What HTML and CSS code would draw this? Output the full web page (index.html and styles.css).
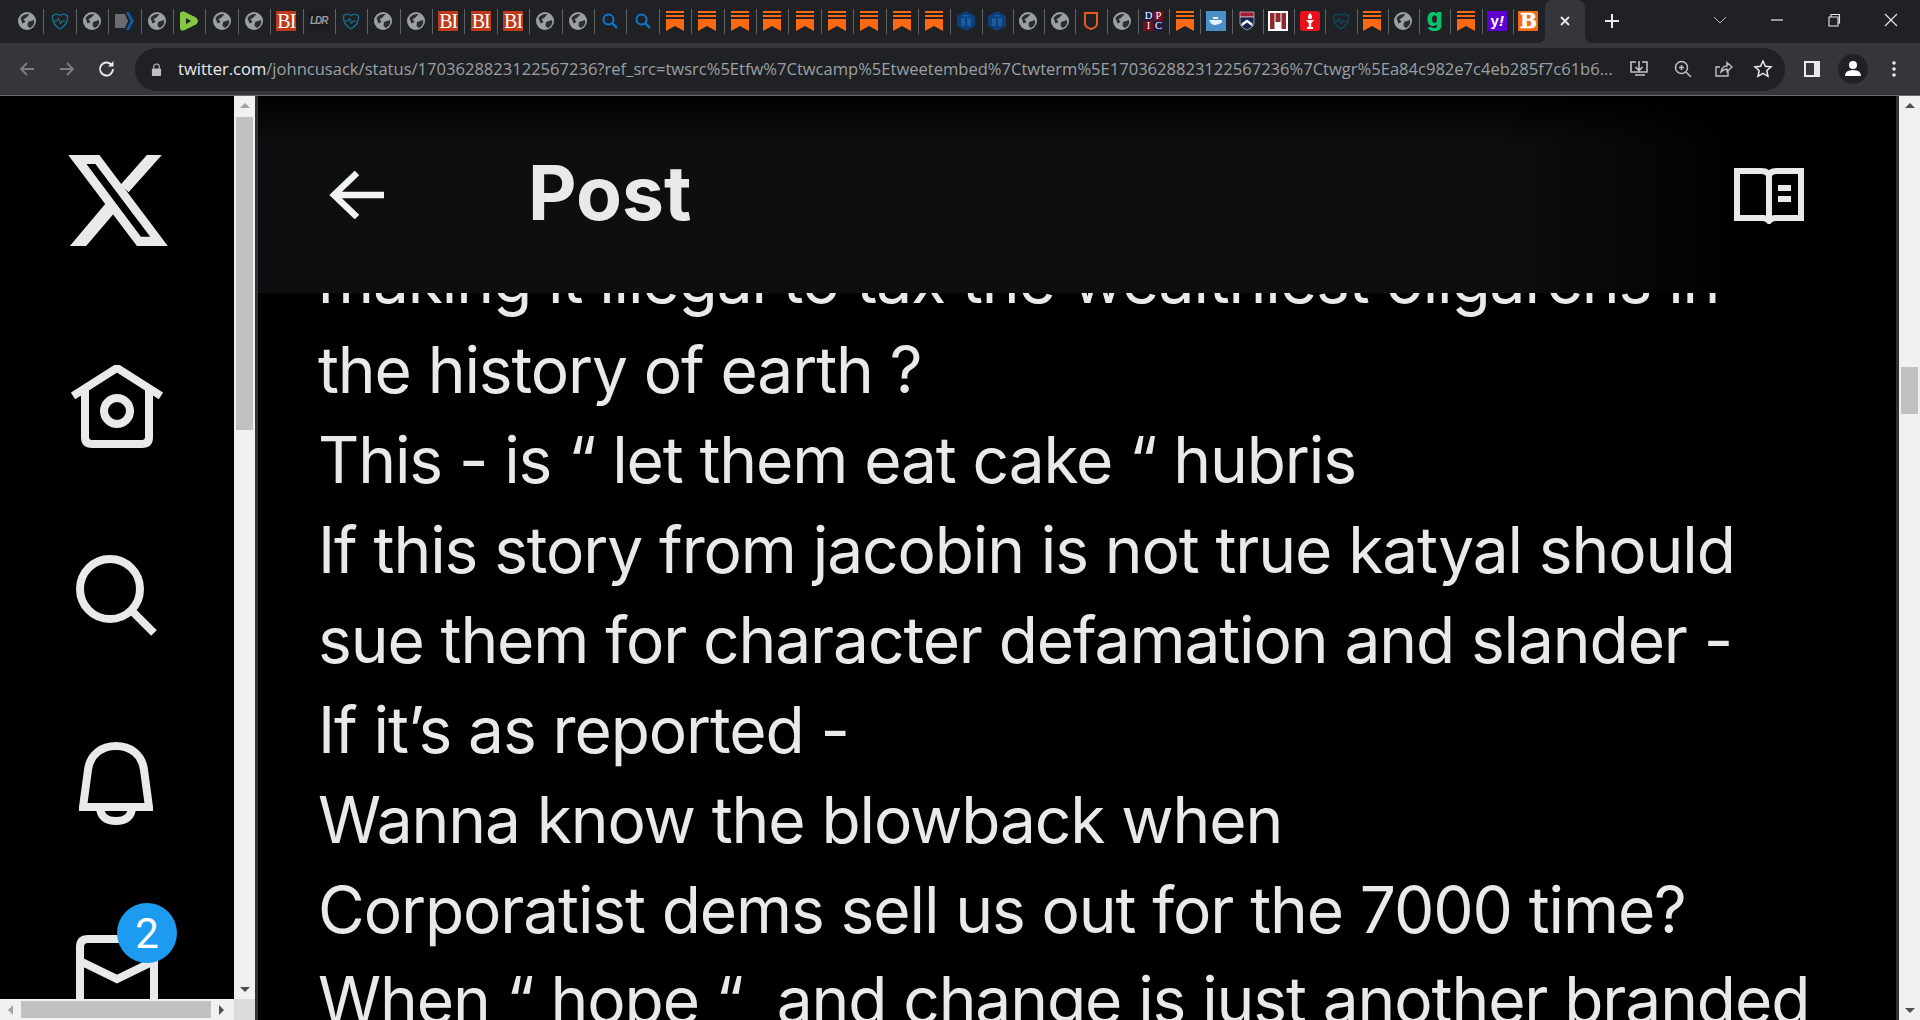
FILE: index.html
```html
<!DOCTYPE html>
<html lang="en">
<head>
<meta charset="utf-8">
<title>Post / X</title>
<link rel="stylesheet" href="styles.css">
</head>
<body>
<svg class="defs" width="0" height="0">
  <symbol id="globe" viewBox="0 0 20 20"><circle cx="10" cy="10" r="9" fill="#9aa0a6"/><path d="M3.500 7Q6.500 2.500 12.500 3L9 7 6.500 8l2 3-3 1.500zM11 11l6-2q1 5.500-4 8l-2.500-2z" fill="#2b2d30"/></symbol>
  <symbol id="heart" viewBox="0 0 20 20"><path d="M10 18C5 15 2 10 2.500 5 5 2.500 8 3 10 4.500 12 3 15 2.500 17.500 5 18 10 15 15 10 18z" fill="none" stroke="#15708f" stroke-width="1.400"/><path d="M4 10h3l1.500-3 2 6 1.500-3h3" fill="none" stroke="#1c7f9c" stroke-width="1"/></symbol>
  <symbol id="heart-dim" viewBox="0 0 20 20"><path d="M10 18C5 15 2 10 2.500 5 5 2.500 8 3 10 4.500 12 3 15 2.500 17.500 5 18 10 15 15 10 18z" fill="none" stroke="#0f4a5e" stroke-width="1.400"/><path d="M4 10h3l1.500-3 2 6 1.500-3h3" fill="none" stroke="#14566c" stroke-width="1"/></symbol>
  <symbol id="arrow" viewBox="0 0 20 20"><path d="M1 3h10l3 7-3 7H1z" fill="#6a6c70"/><path d="M12 1h3l5 9-5 9h-3l4.500-9z" fill="#0d5cab"/></symbol>
  <symbol id="rumble" viewBox="0 0 20 20"><path d="M1 3q0-3 4-2.500l12 6q4 3.500 0 7l-12 6q-4 .5-4-2.500z" fill="#85c742"/><path d="M7 7v6l5-3z" fill="#202124"/></symbol>
  <symbol id="search" viewBox="0 0 20 20"><circle cx="8.500" cy="8.500" r="5" fill="none" stroke="#0b78d0" stroke-width="2"/><path d="m12.500 12.500 4.500 4.500" stroke="#0b78d0" stroke-width="2.400"/></symbol>
  <symbol id="bookmark" viewBox="0 0 20 20"><path d="M1 0h18v2H1zM1 4h18v2H1zM1 8h18v12l-9-5-9 5z" fill="#f96a13"/></symbol>
  <symbol id="hex" viewBox="0 0 20 20"><path d="M10 0 19 5v10l-9 5-9-5V5z" fill="#0d3f78"/><path d="M5 7h4v8H5zM11 7h4v8h-4zM7 4h6v1.500H7z" fill="#1c5c9e"/></symbol>
  <symbol id="shield" viewBox="0 0 20 20"><path d="M4 2h12v11q0 3-6 5-6-2-6-5z" fill="none" stroke="#e8591c" stroke-width="2"/></symbol>
  <symbol id="docker" viewBox="0 0 20 20"><path d="M0 0h20v20H0z" fill="#4b8fc9"/><path d="M3 9h13q1 4-7 5-4 0-6-5zM7 6h5v2H7z" fill="#e8f2fa"/></symbol>
  <symbol id="harvard" viewBox="0 0 20 20"><path d="M3 1h14v5H3z" fill="#a51c30" stroke="#e8e8ee" stroke-width=".6"/><path d="M3 6h14v6q0 4-7 7-7-3-7-7z" fill="#16244f" stroke="#e8e8ee" stroke-width=".6"/><path d="m4.500 12.500 5.500-4 5.500 4v3l-5.500-4-5.500 4z" fill="#fff"/></symbol>
  <symbol id="red-lines" viewBox="0 0 20 20"><path d="M0 0h20v20H0z" fill="#fff"/><path d="M2 2h4.500v16H2zM7.500 2h5v9h-5zM13.500 2H18v16h-4.500z" fill="#8c2a2f"/></symbol>
  <symbol id="torch" viewBox="0 0 20 20"><rect width="20" height="20" rx="3" fill="#e8101a"/><path d="M10 2q3 3 1.500 6h-3Q7 5 10 2zM6 9h8l-2.500 3h-3zM8.800 12h2.400v4H8.800zM7 16h6v2H7z" fill="#fff"/></symbol>
</svg>

<div class="browser">
  <div class="tabstrip">
    <div class="tabs tabs-wide">
      <div class="tab"><svg class="fav"><use href="#globe"/></svg></div>
      <div class="tab"><svg class="fav"><use href="#heart"/></svg></div>
      <div class="tab"><svg class="fav"><use href="#globe"/></svg></div>
      <div class="tab"><svg class="fav"><use href="#arrow"/></svg></div>
      <div class="tab"><svg class="fav"><use href="#globe"/></svg></div>
      <div class="tab"><svg class="fav"><use href="#rumble"/></svg></div>
      <div class="tab"><svg class="fav"><use href="#globe"/></svg></div>
      <div class="tab"><svg class="fav"><use href="#globe"/></svg></div>
      <div class="tab"><span class="fav-text bi">BI</span></div>
      <div class="tab"><span class="fav-text ldr">LDR</span></div>
      <div class="tab"><svg class="fav"><use href="#heart"/></svg></div>
      <div class="tab"><svg class="fav"><use href="#globe"/></svg></div>
      <div class="tab"><svg class="fav"><use href="#globe"/></svg></div>
      <div class="tab"><span class="fav-text bi">BI</span></div>
      <div class="tab"><span class="fav-text bi">BI</span></div>
      <div class="tab"><span class="fav-text bi">BI</span></div>
      <div class="tab"><svg class="fav"><use href="#globe"/></svg></div>
      <div class="tab"><svg class="fav"><use href="#globe"/></svg></div>
      <div class="tab"><svg class="fav"><use href="#search"/></svg></div>
      <div class="tab"><svg class="fav"><use href="#search"/></svg></div>
      <div class="tab"><svg class="fav"><use href="#bookmark"/></svg></div>
      <div class="tab"><svg class="fav"><use href="#bookmark"/></svg></div>
      <div class="tab"><svg class="fav"><use href="#bookmark"/></svg></div>
      <div class="tab"><svg class="fav"><use href="#bookmark"/></svg></div>
      <div class="tab"><svg class="fav"><use href="#bookmark"/></svg></div>
      <div class="tab"><svg class="fav"><use href="#bookmark"/></svg></div>
      <div class="tab"><svg class="fav"><use href="#bookmark"/></svg></div>
      <div class="tab"><svg class="fav"><use href="#bookmark"/></svg></div>
      <div class="tab"><svg class="fav"><use href="#bookmark"/></svg></div>
    </div>
    <div class="tabs tabs-narrow">
      <div class="tab"><svg class="fav"><use href="#hex"/></svg></div>
      <div class="tab"><svg class="fav"><use href="#hex"/></svg></div>
      <div class="tab"><svg class="fav"><use href="#globe"/></svg></div>
      <div class="tab"><svg class="fav"><use href="#globe"/></svg></div>
      <div class="tab"><svg class="fav"><use href="#shield"/></svg></div>
      <div class="tab"><svg class="fav"><use href="#globe"/></svg></div>
      <div class="tab"><span class="fav-text dpic"><i>D</i><i>P</i><i>I</i><i>C</i></span></div>
      <div class="tab"><svg class="fav"><use href="#bookmark"/></svg></div>
      <div class="tab"><svg class="fav"><use href="#docker"/></svg></div>
      <div class="tab"><svg class="fav"><use href="#harvard"/></svg></div>
      <div class="tab"><svg class="fav"><use href="#red-lines"/></svg></div>
      <div class="tab"><svg class="fav"><use href="#torch"/></svg></div>
      <div class="tab"><svg class="fav"><use href="#heart-dim"/></svg></div>
      <div class="tab"><svg class="fav"><use href="#bookmark"/></svg></div>
      <div class="tab"><svg class="fav"><use href="#globe"/></svg></div>
      <div class="tab"><span class="fav-text grammarly">g</span></div>
      <div class="tab"><svg class="fav"><use href="#bookmark"/></svg></div>
      <div class="tab"><span class="fav-text yahoo">y<i>!</i></span></div>
      <div class="tab"><span class="fav-text breitbart">B</span></div>
    </div>
    <div class="tab-active">
      <svg class="flare flare-l" viewBox="0 0 8 8"><path d="M8 0v8H0q8 0 8-8z" fill="#35363a"/></svg>
      <svg class="close-x" viewBox="0 0 12 12"><path d="m2 2 8 8M10 2l-8 8" stroke="#e8eaed" stroke-width="1.800"/></svg>
      <svg class="flare flare-r" viewBox="0 0 8 8"><path d="M0 0v8h8Q0 8 0 0z" fill="#35363a"/></svg>
    </div>
    <svg class="new-tab" viewBox="0 0 16 16"><path d="M8 1v14M1 8h14" stroke="#e8eaed" stroke-width="2"/></svg>
    <div class="win-controls">
      <svg class="win-btn" viewBox="0 0 16 16"><path d="m2 5 6 6 6-6" fill="none" stroke="#bdc1c6" stroke-width="1"/></svg>
      <svg class="win-btn" viewBox="0 0 16 16"><path d="M2 8h12" stroke="#e8eaed" stroke-width="1.200"/></svg>
      <svg class="win-btn" viewBox="0 0 16 16"><path d="M3 5h9v9H3zM5 5V2.500h8.500V11H12" fill="none" stroke="#e8eaed" stroke-width="1.100"/></svg>
      <svg class="win-btn" viewBox="0 0 16 16"><path d="m2 2 12 12M14 2 2 14" stroke="#e8eaed" stroke-width="1.100"/></svg>
    </div>
  </div>

  <div class="toolbar">
    <div class="nav-btns">
      <svg class="tool-icon" viewBox="0 0 20 20"><path d="M17 10H4M10 4l-6 6 6 6" fill="none" stroke="#7b7e83" stroke-width="1.800"/></svg>
      <svg class="tool-icon" viewBox="0 0 20 20"><path d="M3 10h13M10 4l6 6-6 6" fill="none" stroke="#7b7e83" stroke-width="1.800"/></svg>
      <svg class="tool-icon" viewBox="0 0 20 20"><path d="M16 10a6.500 6.500 0 1 1-2-4.700" fill="none" stroke="#e8eaed" stroke-width="1.900"/><path d="M16.500 2v5.500H11z" fill="#e8eaed"/></svg>
    </div>
    <div class="omnibox">
      <svg class="lock" viewBox="0 0 12 14"><path d="M3 6V4a3 3 0 0 1 6 0v2" fill="none" stroke="#bdc1c6" stroke-width="1.300"/><rect x="1" y="6" width="10" height="8" rx="1" fill="#bdc1c6"/></svg>
      <div class="url"><span class="url-host">twitter.com</span>/johncusack/status/1703628823122567236?ref_src=twsrc%5Etfw%7Ctwcamp%5Etweetembed%7Ctwterm%5E1703628823122567236%7Ctwgr%5Ea84c982e7c4eb285f7c61b6...</div>
      <div class="omni-actions">
        <svg class="tool-icon" viewBox="0 0 20 20"><path d="M7 3H2v10h16V3h-5M10 2v9M6.500 8l3.500 3.500L13.500 8M6 16h10" fill="none" stroke="#bdc1c6" stroke-width="1.600"/></svg>
        <svg class="tool-icon" viewBox="0 0 20 20"><circle cx="8.500" cy="8.500" r="6" fill="none" stroke="#bdc1c6" stroke-width="1.500"/><path d="m13 13 5 5M6 8.500h5M8.500 6v5" stroke="#bdc1c6" stroke-width="1.500"/></svg>
        <svg class="tool-icon" viewBox="0 0 20 20"><path d="M15 11v6H3V8h4M8 13q1-6 6-6V3.500L19 8l-5 4.500V10q-3 0-6 3z" fill="none" stroke="#bdc1c6" stroke-width="1.400"/></svg>
        <svg class="tool-icon" viewBox="0 0 20 20"><path d="m10 2 2.400 5.300 5.600.6-4.200 3.800 1.200 5.600-5-2.900-5 2.900 1.200-5.600L2 7.900l5.600-.6z" fill="none" stroke="#e8eaed" stroke-width="1.500"/></svg>
      </div>
    </div>
    <div class="tool-end">
      <svg class="tool-icon" viewBox="0 0 20 20"><path d="M2 2h16v16H2z" fill="#e8eaed"/><path d="M4 4h8v12H4z" fill="#35363a"/></svg>
      <div class="avatar"><svg viewBox="0 0 20 20"><circle cx="10" cy="6" r="4" fill="#fff"/><path d="M2 17q0-6 8-6t8 6z" fill="#fff"/></svg></div>
      <svg class="tool-icon" viewBox="0 0 20 20"><circle cx="10" cy="4" r="1.800" fill="#e8eaed"/><circle cx="10" cy="10" r="1.800" fill="#e8eaed"/><circle cx="10" cy="16" r="1.800" fill="#e8eaed"/></svg>
    </div>
  </div>

  <div class="viewport">
    <div class="side-frame">
      <nav class="side-nav">
        <svg class="nav-x" viewBox="0 0 300 274"><path d="M0 0H94L300 274H207ZM55 27H82L247 246H219Z" fill="#e7e9ea" fill-rule="evenodd"/><path d="M237 0H282L182 112 157 90ZM112 147 137 177 54 274H5Z" fill="#e7e9ea"/></svg>
        <svg class="nav-home" viewBox="0 0 92 83"><path d="M2 31 46 3l44 28M14 24v48q0 7 7 7h50q7 0 7-7V24" fill="none" stroke="#e7e9ea" stroke-width="8"/><circle cx="46" cy="46" r="13" fill="none" stroke="#e7e9ea" stroke-width="8"/></svg>
        <svg class="nav-search" viewBox="0 0 82 82"><circle cx="35" cy="35" r="30" fill="none" stroke="#e7e9ea" stroke-width="8"/><path d="m56 56 23 23" stroke="#e7e9ea" stroke-width="8"/></svg>
        <svg class="nav-bell" viewBox="0 0 74 83"><path d="M4 65h66L65 28C63 12 51 4 37 4S11 12 9 28zM21 65c0 10 7 14 16 14s16-4 16-14" fill="none" stroke="#e7e9ea" stroke-width="8"/></svg>
        <div class="nav-mail">
          <svg class="mail-icon" viewBox="0 0 82 90"><path d="M4 90V12q0-8 8-8h60q6 0 6 8v78M4 26l37 18 37-18" fill="none" stroke="#e7e9ea" stroke-width="8"/></svg>
          <span class="badge">2</span>
        </div>
      </nav>
      <div class="scroll-v">
        <span class="arr arr-up"></span>
        <div class="track"><div class="thumb side-thumb"></div></div>
        <span class="arr arr-down"></span>
      </div>
      <div class="scroll-h">
        <span class="arr arr-left"></span>
        <div class="thumb-h"></div>
        <span class="arr arr-right"></span>
      </div>
      <div class="scroll-corner"></div>
    </div>

    <main class="main-col">
      <header class="post-header">
        <svg class="back" viewBox="0 0 56 48"><path d="M55 24H5M28 2 5 24l23 22" fill="none" stroke="#eff3f4" stroke-width="6.500"/></svg>
        <h1 class="post-title">Post</h1>
        <svg class="reader" viewBox="0 0 70 56"><path d="M3 3h24q8 0 8 6 0-6 8-6h24v47H41q-3 0-6 3-3-3-6-3H3zM35 9v41" fill="none" stroke="#e7e9ea" stroke-width="6"/><path d="M44 17h13v6H44zM44 28h13v6H44z" fill="#e7e9ea"/></svg>
      </header>
      <div class="tweet-text">
        <p>making it illegal to tax the wealthiest oligarchs in</p>
        <p>the history of earth ?</p>
        <p>This - is “ let them eat cake “ hubris</p>
        <p>If this story from jacobin is not true katyal should</p>
        <p>sue them for character defamation and slander -</p>
        <p>If it’s as reported -</p>
        <p>Wanna know the blowback when</p>
        <p>Corporatist dems sell us out for the 7000 time?</p>
        <p>When “ hope “  and change is just another branded</p>
      </div>
    </main>

    <div class="scroll-v page-scroll">
      <span class="arr arr-up"></span>
      <div class="track"><div class="thumb page-thumb"></div></div>
      <span class="arr arr-down"></span>
    </div>
  </div>
</div>
</body>
</html>
```

FILE: styles.css
```css
* { box-sizing: border-box; }
html, body { margin: 0; padding: 0; height: 100%; overflow: hidden; background: #000; }
.defs { position: absolute; }

.browser { display: flex; flex-direction: column; height: 1020px; font-family: "Inter", "Liberation Sans", sans-serif; }

/* tab strip */
.tabstrip { display: flex; align-items: flex-start; height: 43px; background: #202124; padding-left: 11px; flex: none; }
.tabs { display: flex; flex: none; }
.tab { height: 43px; display: flex; align-items: center; justify-content: center; position: relative; flex: none; padding-bottom: 2px; }
.tabs-wide .tab { width: 32.4px; }
.tabs-narrow .tab { width: 31.25px; }
.tab + .tab::before, .tabs-narrow .tab:first-child::before { content: ""; position: absolute; left: 0; top: 9px; height: 25px; width: 1px; background: #5f6368; }
.fav { width: 20px; height: 20px; }

.fav-text { width: 20px; height: 20px; display: flex; align-items: center; justify-content: center; }
.bi { background: #c0391b; color: #fff; font: 400 20px/20px "Liberation Serif", serif; letter-spacing: -1px; }
.ldr { background: #1c1c1e; color: #9a9a9a; font: italic 700 10px/20px "Liberation Sans", sans-serif; letter-spacing: -1px; }
.dpic { display: grid; grid-template-columns: 1fr 1fr; background: #1b1b45; color: #fff; font: 10.500px/10px "Liberation Serif", serif; }
.dpic i { font-style: normal; text-align: center; }
.dpic i:nth-child(2), .dpic i:nth-child(3) { background: #6f1020; }
.grammarly { color: #08c36d; font: 800 25px/20px "Inter", sans-serif; padding-bottom: 8px; }
.yahoo { background: #5f01d1; color: #fff; font: 700 15px/20px "Liberation Sans", sans-serif; }
.yahoo i { font-style: italic; }
.breitbart { background: #f96a13; color: #fff; font: 700 20px/20px "DejaVu Serif", serif; -webkit-text-stroke: .5px #fff; }

.tab-active { width: 40px; height: 43px; margin-left: 1px; background: #35363a; border-radius: 8px 8px 0 0; display: flex; align-items: center; justify-content: center; position: relative; padding-bottom: 2px; flex: none; }
.close-x { width: 12px; height: 12px; }
.flare { position: absolute; bottom: 0; width: 8px; height: 8px; }
.flare-l { left: -8px; }
.flare-r { right: -8px; }
.new-tab { width: 16px; height: 16px; margin: 13px 0 0 19px; flex: none; }

.win-controls { margin-left: auto; display: flex; padding-top: 12px; padding-right: 21px; gap: 41px; }
.win-btn { width: 16px; height: 16px; }

/* toolbar */
.toolbar { height: 53px; flex: none; background: #35363a; border-bottom: 1px solid #6a6c70; display: flex; align-items: center; }
.nav-btns { display: flex; gap: 20px; padding-left: 17px; width: 135px; }
.tool-icon { width: 20px; height: 20px; flex: none; }
.omnibox { width: 1650px; height: 43px; background: #202124; border-radius: 22px; display: flex; align-items: center; padding: 0 12px 0 16px; flex: none; }
.lock { width: 11px; height: 13px; flex: none; }
.url { margin-left: 16px; font: 400 16.56px/22px "Open Sans", sans-serif; color: #9aa0a6; white-space: nowrap; flex: none; }
.url-host { color: #e8eaed; }
.omni-actions { display: flex; gap: 20px; margin-left: auto; }
.omni-actions .tool-icon:first-child { margin-right: 4px; }
.tool-end { display: flex; align-items: center; padding-left: 17px; }
.avatar { width: 30px; height: 30px; background: #202124; border-radius: 50%; margin-left: 16px; display: flex; align-items: center; justify-content: center; }
.avatar svg { width: 20px; height: 20px; }
.tool-end .tool-icon:last-child { margin-left: 16px; }

/* page area */
.viewport { flex: 1; display: flex; min-height: 0; background: #000; }
.side-frame { width: 255px; flex: none; position: relative; overflow: hidden; display: flex; }
.side-nav { width: 234px; flex: none; height: 924px; position: relative; overflow: hidden; display: flex; flex-direction: column; align-items: center; padding-top: 59px; }
.side-nav svg { flex: none; display: block; }
.nav-x { width: 100px; height: 91px; margin-left: 1px; }
.nav-home { width: 92px; height: 83px; margin-top: 119px; }
.nav-search { width: 82px; height: 82px; margin-top: 106px; margin-right: 2px; }
.nav-bell { width: 74px; height: 83px; margin-top: 106px; margin-right: 2px; }
.nav-mail { position: relative; width: 82px; margin-top: 110px; flex: none; }
.mail-icon { width: 82px; height: 90px; }
.badge { position: absolute; left: 41px; top: -32px; width: 60px; height: 60px; border-radius: 50%; background: #1d9bf0; color: #fff; font: 400 42px/62px "Roboto", sans-serif; text-align: center; }

.scroll-v { width: 21px; flex: none; background: #f1f1f1; position: relative; display: flex; flex-direction: column; align-items: center; height: 924px; }
.side-frame .scroll-v { height: 903px; }
.track { flex: 1; width: 100%; position: relative; }
.thumb { position: absolute; left: 2px; width: 17px; background: #c1c1c1; }
.side-thumb { top: 2px; height: 313px; }
.page-thumb { top: 252px; height: 47px; }
.arr { flex: none; width: 0; height: 0; border-style: solid; border-color: transparent; }
.scroll-v > .arr { margin: 7px 0; }
.arr-up { border-width: 0 5px 5px; border-bottom-color: #a3a3a3; }
.arr-down { border-width: 5px 5px 0; border-top-color: #505050; }
.page-scroll .arr-up { border-bottom-color: #505050; }
.arr-left { border-width: 5px 5px 5px 0; border-right-color: #a3a3a3; }
.arr-right { border-width: 5px 0 5px 5px; border-left-color: #505050; }

.scroll-h { position: absolute; left: 0; bottom: 0; width: 234px; height: 21px; background: #f1f1f1; display: flex; align-items: center; padding: 0 8px; }
.thumb-h { width: 190px; height: 17px; background: #c1c1c1; margin: 0 8px; flex: none; }
.scroll-corner { position: absolute; right: 0; bottom: 0; width: 21px; height: 21px; background: #dcdcdc; }

/* post column */
.main-col { flex: 1; min-width: 0; position: relative; overflow: hidden; border-left: 3px solid #2f3336; border-right: 3px solid #2f3336; height: 924px; }
.post-header { position: absolute; left: 0; right: 0; top: 0; height: 197px; display: flex; align-items: center; padding: 0 92px 0 71px; z-index: 2; background: linear-gradient(90deg, #0d0e0f 0%, #0d0e0f 76%, #000 91%); }
.post-header::after { content: ""; position: absolute; left: 0; right: 0; top: 0; height: 50px; background: linear-gradient(#000, transparent); }
.back { width: 56px; height: 48px; flex: none; }
.post-title { margin: 0 0 4px 143px; font: 700 75px/1 "Inter", sans-serif; color: #e7e9ea; flex: 1; }
.reader { width: 70px; height: 56px; flex: none; margin-top: 2px; }

.tweet-text { padding: 139px 0 0 60px; color: #e7e9ea; font: 400 64px/90px "Inter", sans-serif; letter-spacing: -1.1px; }
.tweet-text p { margin: 0; white-space: pre; }
```
